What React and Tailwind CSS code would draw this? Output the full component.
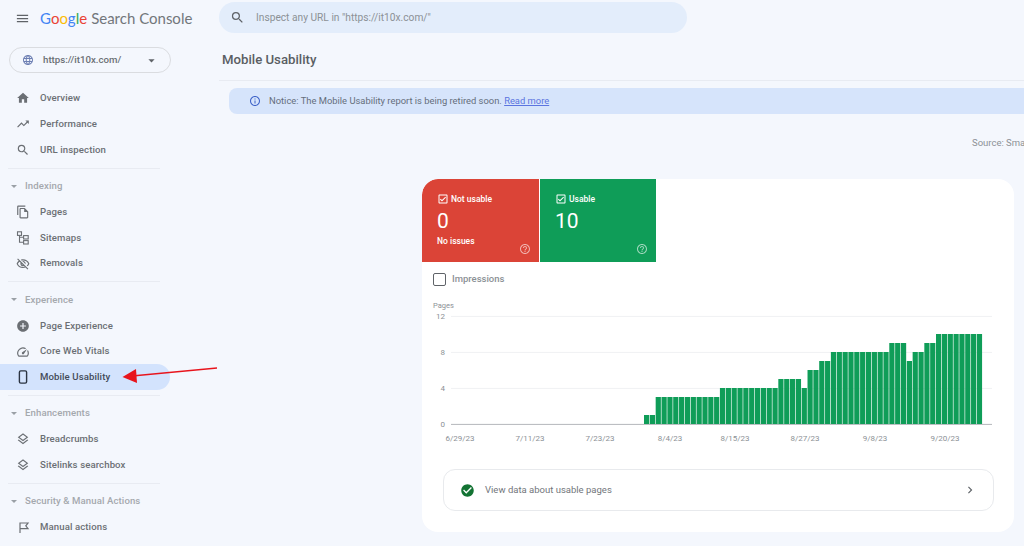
import React from "react";
import {
  MdMenu,
  MdLanguage,
  MdArrowDropDown,
  MdHome,
  MdTrendingUp,
  MdSearch,
  MdOutlineFileCopy,
  MdOutlineVisibilityOff,
  MdAddCircle,
  MdOutlineSpeed,
  MdOutlineLayers,
  MdInfoOutline,
  MdOutlineCheckBox,
  MdHelpOutline,
  MdCheckCircle,
  MdChevronRight,
} from "react-icons/md";

const SitemapIcon = ({ size, className }) => (
  <svg width={size} height={size} viewBox="0 0 14 14" fill="none" stroke="currentColor" strokeWidth="1.1" className={className}>
    <rect x="1.5" y="0.8" width="4" height="3.6" />
    <rect x="7.6" y="4.6" width="4.6" height="3.4" />
    <rect x="7.6" y="9.6" width="4.6" height="3.4" />
    <path d="M3.5 4.4V11.3H7.6M3.5 6.3H7.6" />
  </svg>
);

const MobileIcon = ({ size, className }) => (
  <svg width={size} height={size} viewBox="0 0 14 14" fill="none" stroke="currentColor" strokeWidth="1.4" className={className}>
    <rect x="3.4" y="0.9" width="7.2" height="12.2" rx="1.4" />
  </svg>
);

const FlagIcon = ({ size, className }) => (
  <svg width={size} height={size} viewBox="0 0 14 14" fill="none" stroke="currentColor" strokeWidth="1.2" className={className}>
    <path d="M4 13V3H12L9.8 5.8L12 8.6H4" />
  </svg>
);

const runs = [
  [1, 2], [3, 11], [4, 10], [5, 4], [4, 1], [6, 2], [7, 2],
  [8, 10], [9, 3], [7, 1], [8, 2], [9, 2], [10, 8],
];
const bars = runs.flatMap(([value, count]) => Array(count).fill(value));

const yTicks = [12, 8, 4, 0];
const xTicks = [
  ["6/29/23", 460],
  ["7/11/23", 530],
  ["7/23/23", 600],
  ["8/4/23", 670],
  ["8/15/23", 735],
  ["8/27/23", 805],
  ["9/8/23", 875],
  ["9/20/23", 945],
];

const NavItem = ({ icon: Icon, label, active }) => (
  <div
    className={`flex h-[25.8px] w-[170px] items-center rounded-r-full pl-[16px] ${
      active ? "bg-[#d3e3fd] text-[#444b59]" : "text-[#6b6f74]"
    }`}
  >
    <Icon size={14} className={active ? "text-[#2b3442]" : "text-[#6b6f74]"} />
    <span className="ml-[10px] text-[9.6px] font-medium tracking-[0.1px]">{label}</span>
  </div>
);

const SectionTitle = ({ label }) => (
  <div className="flex h-[25.8px] items-center pl-[11px] text-[#a4a8ad]">
    <span className="h-0 w-0 border-x-[3px] border-t-[3px] border-x-transparent border-t-[#9aa0a6]" />
    <span className="ml-[8px] text-[9.6px] font-medium tracking-[0.1px]">{label}</span>
  </div>
);

const Divider = () => <div className="my-[4.75px] ml-[8px] h-px w-[152px] bg-[#e8ebf2]" />;

const Sidebar = () => (
  <aside className="flex w-[219px] shrink-0 flex-col">
    <div className="flex h-[36px] items-center pl-[15px]">
      <MdMenu size={15} className="text-[#5f6368]" />
      <div className="ml-[10px] whitespace-nowrap font-['Lato',sans-serif] text-[15px] leading-none text-[#72767b]">
        <span className="text-[#4285f4]">G</span>
        <span className="text-[#ea4335]">o</span>
        <span className="text-[#fbbc05]">o</span>
        <span className="text-[#4285f4]">g</span>
        <span className="text-[#34a853]">l</span>
        <span className="text-[#ea4335]">e</span>
        <span className="ml-[4px]">Search Console</span>
      </div>
    </div>
    <div className="ml-[9px] mt-[11px] flex h-[26px] w-[162px] items-center rounded-full border border-[#dadce0] pl-[12px] pr-[11px]">
      <MdLanguage size={12} className="text-[#6d7fb3]" />
      <span className="ml-[9px] flex-1 text-[9.7px] font-medium text-[#6b6f74]">https://it10x.com/</span>
      <MdArrowDropDown size={15} className="text-[#5f6368]" />
    </div>
    <div className="mt-[12.5px] flex flex-col">
      <NavItem icon={MdHome} label="Overview" />
      <NavItem icon={MdTrendingUp} label="Performance" />
      <NavItem icon={MdSearch} label="URL inspection" />
      <Divider />
      <SectionTitle label="Indexing" />
      <NavItem icon={MdOutlineFileCopy} label="Pages" />
      <NavItem icon={SitemapIcon} label="Sitemaps" />
      <NavItem icon={MdOutlineVisibilityOff} label="Removals" />
      <Divider />
      <SectionTitle label="Experience" />
      <NavItem icon={MdAddCircle} label="Page Experience" />
      <NavItem icon={MdOutlineSpeed} label="Core Web Vitals" />
      <NavItem icon={MobileIcon} label="Mobile Usability" active />
      <Divider />
      <SectionTitle label="Enhancements" />
      <NavItem icon={MdOutlineLayers} label="Breadcrumbs" />
      <NavItem icon={MdOutlineLayers} label="Sitelinks searchbox" />
      <Divider />
      <SectionTitle label="Security & Manual Actions" />
      <NavItem icon={FlagIcon} label="Manual actions" />
    </div>
  </aside>
);

const Tile = ({ title, value, note, className }) => (
  <div className={`relative h-[83px] pl-[15px] pt-[14px] text-white ${className}`}>
    <div className="flex items-center gap-[2px] text-[8.5px] font-medium">
      <MdOutlineCheckBox size={12} />
      {title}
    </div>
    <div className="mt-[3px] text-[21px] leading-[24px]">{value}</div>
    {note && <div className="mt-[2px] text-[8.5px] font-medium">{note}</div>}
    <MdHelpOutline size={12} className="absolute bottom-[7px] right-[8px] text-white/60" />
  </div>
);

const Chart = () => (
  <svg viewBox="422 296 592 152" className="block h-[152px] w-[592px]" fontFamily="Roboto, sans-serif">
    <text x="433" y="308" fontSize="7.5" fill="#8c9196">Pages</text>
    {yTicks.map((tick) => {
      const y = 424.4 - tick * 9;
      return (
        <g key={tick}>
          <text x="445" y={y + 3} fontSize="8" fill="#8c9196" textAnchor="end">{tick}</text>
          <line x1="451" x2="992" y1={y} y2={y} stroke={tick === 0 ? "#b4b7bb" : "#f0f1f3"} strokeWidth="1" />
        </g>
      );
    })}
    {bars.map((value, i) => (
      <rect key={i} x={644 + i * 5.84} y={424 - value * 9} width="5.2" height={value * 9} fill="#0f9d58" />
    ))}
    {xTicks.map(([label, x]) => (
      <text key={label} x={x} y="441" fontSize="8" fill="#8c9196" textAnchor="middle">{label}</text>
    ))}
  </svg>
);

const Main = () => (
  <main className="flex min-w-0 flex-1 flex-col">
    <div className="mt-[2px] flex h-[31px] w-[468px] items-center rounded-full bg-[#e3edfb] pl-[11px]">
      <MdSearch size={15} className="text-[#5f6368]" />
      <span className="ml-[11px] text-[10.2px] text-[#8c9196]">Inspect any URL in "https://it10x.com/"</span>
    </div>
    <h1 className="ml-[3px] mt-[18px] text-[13.2px] font-medium leading-[18px] text-[#5a5e63]">Mobile Usability</h1>
    <div className="mt-[11px] h-px bg-[#e8ebf2]" />
    <div className="ml-[10px] mt-[7px] flex h-[26px] items-center rounded-l-lg bg-[#d6e4fb] pl-[20px]">
      <MdInfoOutline size={12} className="text-[#3f63c8]" />
      <span className="ml-[8px] text-[9.4px] text-[#656e7c]">
        Notice: The Mobile Usability report is being retired soon.{" "}
        <span className="text-[#5b74e0] underline">Read more</span>
      </span>
    </div>
    <div className="mt-[22px] h-[14px] overflow-hidden whitespace-nowrap pl-[753px] text-[9.5px] leading-[14px] text-[#8c9196]">
      Source: Sma
    </div>
    <section className="ml-[203px] mt-[29px] h-[353px] w-[592px] shrink-0 overflow-hidden rounded-2xl bg-white">
      <div className="flex">
        <Tile title="Not usable" value="0" note="No issues" className="w-[117px] rounded-tl-2xl bg-[#db4437]" />
        <Tile title="Usable" value="10" className="ml-px w-[116px] bg-[#0f9d58]" />
      </div>
      <div className="ml-[11px] mt-[10px] flex h-[14px] items-center">
        <span className="h-[13px] w-[13px] rounded-[2px] border border-[#5f6368]" />
        <span className="ml-[6px] text-[9.5px] font-medium text-[#8c9196]">Impressions</span>
      </div>
      <div className="mt-[10px]">
        <Chart />
      </div>
      <div className="ml-[21px] mt-[21px] flex h-[42px] w-[551px] items-center rounded-xl border border-[#e8eaed] pl-[16px] pr-[16px]">
        <MdCheckCircle size={15} className="text-[#137333]" />
        <span className="ml-[10px] flex-1 text-[9.5px] text-[#72767b]">View data about usable pages</span>
        <MdChevronRight size={14} className="text-[#5f6368]" />
      </div>
    </section>
  </main>
);

export default function App() {
  return (
    <div className="relative flex h-[546px] w-[1024px] overflow-hidden bg-[#f4f7fd] font-['Roboto',sans-serif]">
      <Sidebar />
      <Main />
      <svg className="absolute left-[118px] top-[362px] h-[26px] w-[104px]" viewBox="118 362 104 26">
        <line x1="217" y1="368" x2="132" y2="376" stroke="#e8141c" strokeWidth="1.3" />
        <polygon points="122.5,377 136,369 137,383" fill="#e8141c" />
      </svg>
    </div>
  );
}
